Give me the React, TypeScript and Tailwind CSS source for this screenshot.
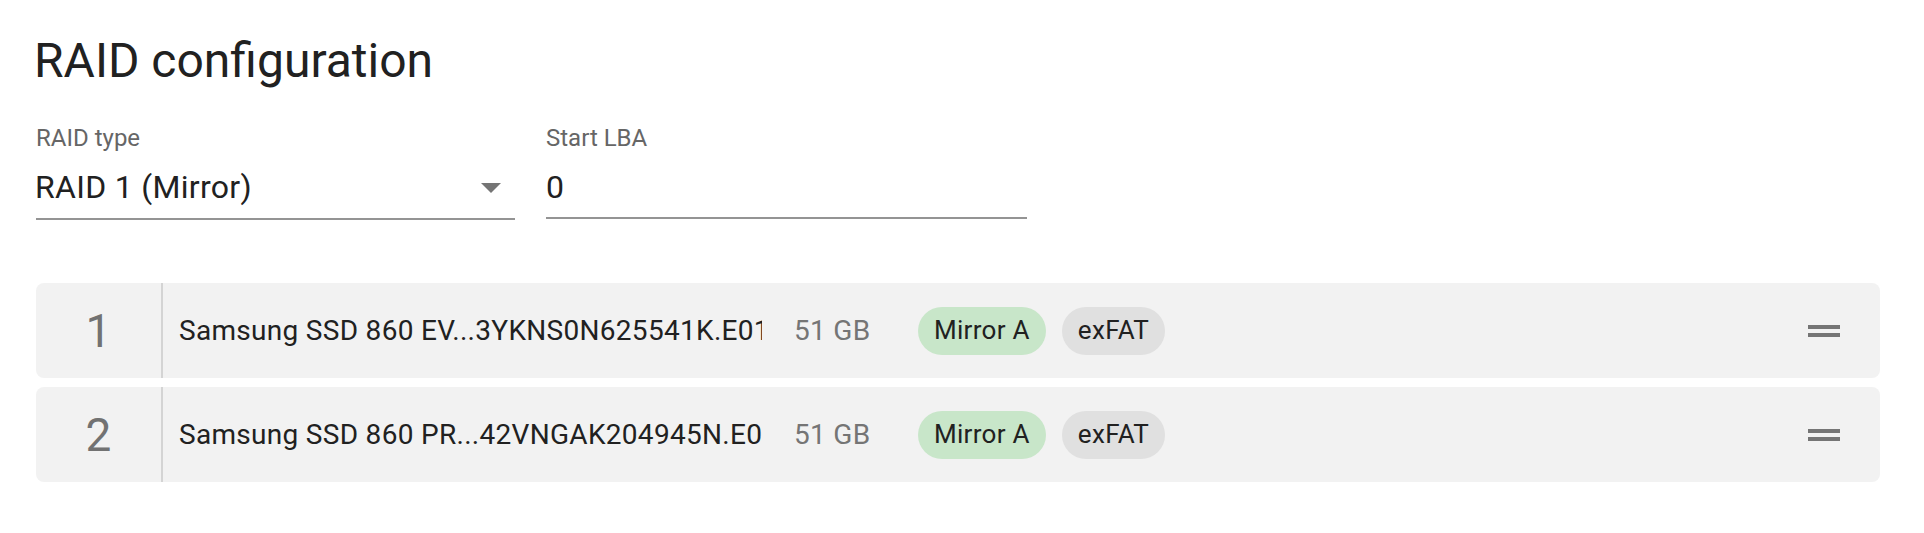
import React from 'react';

interface Disk {
  index: number;
  name: string;
  size: string;
  role: string;
  fs: string;
}

const disks: Disk[] = [
  { index: 1, name: 'Samsung SSD 860 EV...3YKNS0N625541K.E01', size: '51 GB', role: 'Mirror A', fs: 'exFAT' },
  { index: 2, name: 'Samsung SSD 860 PR...42VNGAK204945N.E01', size: '51 GB', role: 'Mirror A', fs: 'exFAT' },
];

const DragHandle = () => (
  <svg className="h-[48px] w-[48px] shrink-0 text-[#757575]" viewBox="0 0 24 24" fill="currentColor">
    <path d="M20 9H4v2h16V9zM4 15h16v-2H4v2z" />
  </svg>
);

const ArrowDown = () => (
  <svg className="h-[48px] w-[48px] shrink-0 text-[#757575]" viewBox="0 0 24 24" fill="currentColor">
    <path d="M7 10l5 5 5-5z" />
  </svg>
);

const DiskRow: React.FC<{ disk: Disk }> = ({ disk }) => (
  <div className="flex h-[95px] items-center rounded-[8px] bg-[#f2f2f2] tracking-[0.3px]">
    <div className="w-[125px] text-center text-[46px] leading-none text-[#727272]">{disk.index}</div>
    <div className="w-[2px] self-stretch bg-[#d4d4d4]" />
    <div className="ml-[16px] w-[583px] overflow-hidden whitespace-nowrap text-[28px] text-[#212121]">
      {disk.name}
    </div>
    <div className="ml-[32px] w-[124px] text-[28px] text-[#757575]">{disk.size}</div>
    <div className="flex gap-[16px]">
      <span className="flex h-[48px] items-center rounded-full bg-[#c8e6c9] px-[16px] text-[26px] text-[#212121]">
        {disk.role}
      </span>
      <span className="flex h-[48px] items-center rounded-full bg-[#e0e0e0] px-[16px] text-[26px] text-[#212121]">
        {disk.fs}
      </span>
    </div>
    <div className="ml-auto mr-[32px]">
      <DragHandle />
    </div>
  </div>
);

export default function App() {
  return (
    <div className="min-h-screen bg-white pl-[36px] pr-[44px] pt-[29px] font-['Roboto',sans-serif]">
      <h1 className="-ml-[2px] text-[48px] font-normal leading-[64px] text-[#212121]">RAID configuration</h1>

      <div className="mt-[33px] flex gap-[31px]">
        <div className="w-[479px]">
          <div className="text-[24px] leading-[24px] text-[#666666]">RAID type</div>
          <div className="mt-[7px] flex items-center justify-between border-b-2 border-[#949494] pb-[7px] pt-[6px]">
            <span className="-ml-[1px] text-[32px] leading-[46px] tracking-[0.3px] text-[#212121]">RAID 1 (Mirror)</span>
            <ArrowDown />
          </div>
        </div>
        <div className="w-[481px]">
          <div className="text-[24px] leading-[24px] text-[#666666]">Start LBA</div>
          <div className="mt-[7px] flex h-[62px] items-center border-b-2 border-[#949494] pb-[7px] pt-[6px]">
            <span className="text-[32px] leading-[46px] tracking-[0.3px] text-[#212121]">0</span>
          </div>
        </div>
      </div>

      <div className="mt-[63px] flex flex-col gap-[9px]">
        {disks.map((d) => (
          <DiskRow key={d.index} disk={d} />
        ))}
      </div>
    </div>
  );
}
